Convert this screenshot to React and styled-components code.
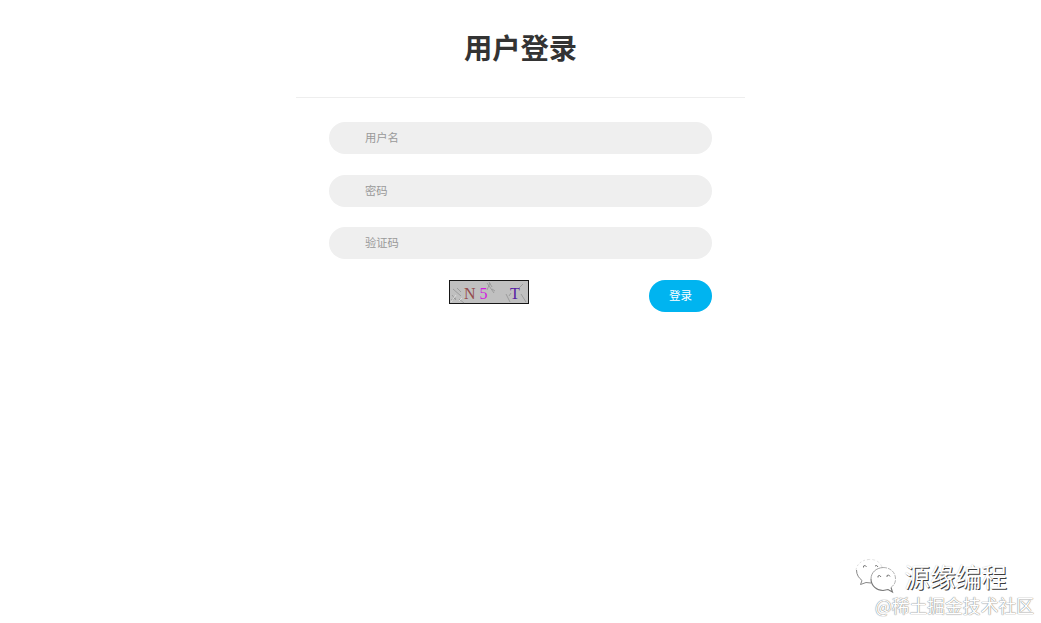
import { useState } from "react";
import styled, { createGlobalStyle } from "styled-components";

const App = () => {
  const [form, setForm] = useState({ username: '', password: '', code: '' })

  const handleChange = e => setForm({ ...form, [e.target.name]: e.target.value })

  return (<>
    <GlobalStyle />
    <Page>
      <Title>用户登录</Title>
      <Form onSubmit={e => e.preventDefault()}>
        <Input name="username" placeholder="用户名" value={form.username} onChange={handleChange} />
        <Input name="password" type="password" placeholder="密码" value={form.password} onChange={handleChange} />
        <Input name="code" placeholder="验证码" value={form.code} onChange={handleChange} />
        <Actions>
          <Captcha />
          <Button type="submit">登录</Button>
        </Actions>
      </Form>
    </Page>
    <Watermark>
      <Account>
        <WechatLogo />
        <AccountName>源缘编程</AccountName>
      </Account>
      <Community>@稀土掘金技术社区</Community>
    </Watermark>
  </>);
}

export default App;

const Captcha = () => (
  <CaptchaImage width="80" height="24" viewBox="0 0 80 24">
    <rect x="0.5" y="0.5" width="79" height="23" fill="#c0c0c0" stroke="#161616" />
    <g stroke="#8c8c8c" strokeWidth="0.7" fill="none">
      <path d="M4 9l8 7M8 8l4 4M3 15l4 5M2 20l5-2M10 19l5 4" />
      <path d="M38 3l7 10M40 2l3 5M38 10l3-7M43 9l3 2" />
      <path d="M57 14l4 8M60 16l2-3M72 14l5 8M74 4l-5 5" />
    </g>
    <g stroke="#e2e2e2" strokeWidth="0.8">
      <path d="M2 22l5-7M10 21l3-3" />
    </g>
    <g fontFamily="'Liberation Serif', serif" fontSize="16">
      <text x="15" y="18.5" fill="#954b4b">N</text>
      <text x="30.5" y="18.5" fill="#d21ae0">5</text>
      <text x="61" y="18.5" fill="#5721a4">T</text>
    </g>
  </CaptchaImage>
)

const WechatLogo = () => (
  <Logo width="42" height="36" viewBox="0 0 42 36" fill="none">
    <path d="M27 9C25 3.5 20 1 14 1.5" stroke="#dedede" strokeWidth="0.8" strokeDasharray="3 2" />
    <path d="M14 1.5C6 2 1 7 1 13" stroke="#d6d6d6" strokeWidth="0.8" strokeDasharray="2 2" />
    <path d="M1.5 12C1.5 17 4 20 7 22.5L5.5 26.5L11 24.5L16 25" stroke="#888" />
    <path d="M16 21C16 14.5 21 10 28 9.5" stroke="#999" strokeWidth="0.9" />
    <path d="M28 9.5C35 9.5 40.5 14 40.5 21C40.5 25 39 27 36 29.5" stroke="#aaa" strokeWidth="0.9" strokeDasharray="4 1" />
    <path d="M16 21C16 28 22 32.5 28 32.5L33 31.5L37.5 34L36 29.5" stroke="#777" strokeWidth="1.1" />
    <g stroke="#777">
      <path d="M8.5 9.5V8q2-1.5 3 1M20 8q2-1.5 3 1" />
      <path d="M23 19.5V18q2-1.5 3 1M32 19V17.5q2-1.5 3 1" />
    </g>
  </Logo>
)

const GlobalStyle = createGlobalStyle`
* {
  box-sizing: border-box;
}

body {
  margin: 0;
  background: #fff;
  color: #333;
  font-family: "Noto Sans CJK SC", sans-serif;
}

#root {
  display: flex;
  flex-direction: column;
  height: 100vh;
}
`

const Page = styled.main`
flex: 1;
display: flex;
flex-direction: column;
align-items: center;
`

const Title = styled.h1`
width: 449px;
height: 98px;
margin: 0;
border-bottom: 1px solid #eee;
text-align: center;
font-size: 28.3px;
font-weight: 700;
line-height: 94px;
`

const Form = styled.form`
display: flex;
flex-direction: column;
gap: 20.6px;
width: 383px;
padding-top: 24px;
`

const Input = styled.input`
height: 32px;
padding: 0 36px 2px;
border: 0;
border-radius: 16px;
outline: 0;
background: #efefef;
color: #333;
font-family: inherit;
font-size: 11.3px;

&::placeholder {
  color: #999;
}
`

const Actions = styled.div`
display: flex;
justify-content: space-between;
align-items: flex-start;
padding-left: 120px;
`

const CaptchaImage = styled.svg`
display: block;
`

const Button = styled.button`
width: 63px;
height: 32px;
padding: 0 0 1px;
border: 0;
border-radius: 16px;
background: #00b4f0;
color: #fff;
font-family: inherit;
font-size: 11.5px;
cursor: pointer;
`

const Watermark = styled.footer`
display: flex;
flex-direction: column;
align-items: flex-end;
padding: 0 7px 6px 0;
`

const Account = styled.div`
display: flex;
align-items: center;
gap: 7px;
height: 36px;
margin-right: 27px;
`

const Logo = styled.svg`
display: block;
margin-top: 2px;
`

const AccountName = styled.span`
color: #fff;
font-size: 25.7px;
line-height: 37px;
text-shadow: 1px 1px 0 #3c3c3c, 0 0 1px #bbb;
`

const Community = styled.span`
color: #fff;
font-size: 17.8px;
line-height: 24px;
text-shadow: 0 0 1px #777, 0 0 1px #999;
`
